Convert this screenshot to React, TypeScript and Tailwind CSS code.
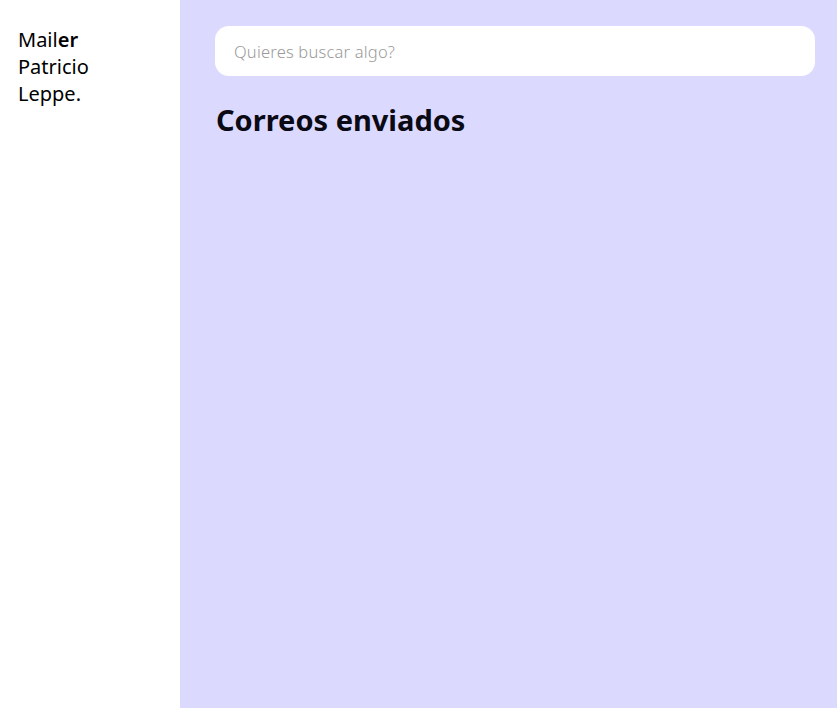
export default function App() {
  return (
    <div className="flex min-h-[708px] w-full font-['Noto_Sans',sans-serif]">
      <aside className="w-[180px] shrink-0 bg-white px-[18px] pt-[26px] text-[20px] leading-[27px] text-black">
        <div>
          Mail<span className="font-semibold">er</span>
        </div>
        <div>Patricio</div>
        <div>Leppe.</div>
      </aside>

      <main className="flex-1 bg-[#dcd9fe] pl-[35px] pt-[26px]">
        <input
          type="text"
          placeholder="Quieres buscar algo?"
          className="h-[50px] w-[600px] rounded-[14px] bg-white px-[19px] text-[16.5px] font-light tracking-[0.2px] text-gray-700 outline-none placeholder:text-[#9a9a9a]"
        />
        <h1 className="mt-[24px] pl-px text-[29px] font-bold leading-[40px] text-[#0a0a14]">
          Correos enviados
        </h1>
      </main>
    </div>
  );
}
